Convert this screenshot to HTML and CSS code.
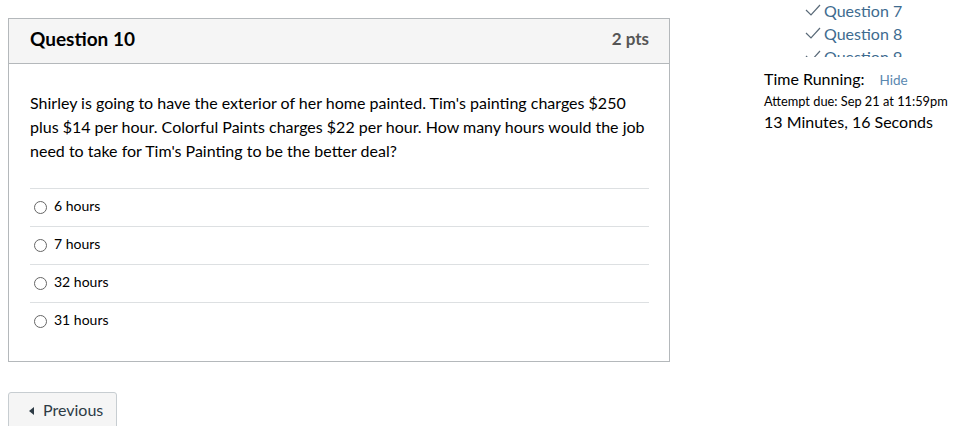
FILE: index.html
```html
<!DOCTYPE html>
<html>
<head>
<meta charset="utf-8">
<link rel="stylesheet" href="styles.css">
</head>
<body>
<div class="page">
  <div class="main">
    <div class="card">
      <div class="card-head">
        <span class="q-title">Question 10</span>
        <span class="q-pts">2 pts</span>
      </div>
      <div class="card-body">
        <p class="q-text">Shirley is going to have the exterior of her home painted. Tim's painting charges $250 plus $14 per hour. Colorful Paints charges $22 per hour. How many hours would the job need to take for Tim's Painting to be the better deal?</p>
        <div class="answers">
          <label class="answer"><span class="radio"></span><span>6 hours</span></label>
          <label class="answer"><span class="radio"></span><span>7 hours</span></label>
          <label class="answer"><span class="radio"></span><span>32 hours</span></label>
          <label class="answer"><span class="radio"></span><span>31 hours</span></label>
        </div>
      </div>
    </div>
    <div class="nav">
      <button class="btn"><span class="tri"></span>Previous</button>
    </div>
  </div>
  <div class="side">
    <ul class="qlist">
      <li><svg class="check" viewBox="0 0 16 12" width="16" height="12"><path d="M1 6 L6 11 L15 1" fill="none" stroke="#5a6a78" stroke-width="1.2"/></svg>Question 7</li>
      <li><svg class="check" viewBox="0 0 16 12" width="16" height="12"><path d="M1 6 L6 11 L15 1" fill="none" stroke="#5a6a78" stroke-width="1.2"/></svg>Question 8</li>
      <li><svg class="check" viewBox="0 0 16 12" width="16" height="12"><path d="M1 6 L6 11 L15 1" fill="none" stroke="#5a6a78" stroke-width="1.2"/></svg>Question 9</li>
    </ul>
    <div class="timer">
      <div class="t-row"><span class="t-label">Time Running:</span><span class="hide">Hide</span></div>
      <div class="due">Attempt due: Sep 21 at 11:59pm</div>
      <div class="remain">13 Minutes, 16 Seconds</div>
    </div>
  </div>
</div>
</body>
</html>
```

FILE: styles.css
```css
html, body {
  margin: 0;
  padding: 0;
  background: #fff;
  font-family: Lato, "Liberation Sans", sans-serif;
  color: #2d3b45;
}
.page {
  display: flex;
  align-items: flex-start;
  padding-left: 8px;
}
.main {
  width: 662px;
  padding-top: 18px;
}
.card {
  border: 1px solid #b4b8bb;
}
.card-head {
  display: flex;
  justify-content: space-between;
  align-items: center;
  height: 45px;
  padding: 0 20px 5px 21px;
  box-sizing: border-box;
  background: #f5f5f5;
  border-bottom: 1px solid #b4b8bb;
}
.q-title {
  font-size: 19px;
  font-weight: 700;
  color: #000;
}
.q-pts {
  font-size: 17px;
  font-weight: 700;
  color: #555;
}
.card-body {
  padding: 27px 20px 21px 21px;
}
.q-text {
  margin: 0 0 25px 0;
  font-size: 16px;
  line-height: 24px;
  color: #000;
}
.answers {
  display: flex;
  flex-direction: column;
}
.answer {
  display: flex;
  align-items: center;
  height: 38px;
  padding-bottom: 4px;
  border-top: 1px solid #dde0e2;
  box-sizing: border-box;
  font-size: 14px;
  color: #000;
  padding-left: 4px;
}
.radio {
  width: 11px;
  height: 11px;
  border: 1px solid #666;
  border-radius: 50%;
  margin-right: 7px;
  margin-top: 3px;
}
.nav {
  padding-top: 30px;
}
.btn {
  display: flex;
  align-items: center;
  height: 40px;
  padding: 0 13px 5px 20px;
  background: #f5f5f5;
  border: 1px solid #c7cdd1;
  border-radius: 3px;
  font-family: Lato, "Liberation Sans", sans-serif;
  font-size: 16px;
  color: #2d3b45;
}
.tri {
  width: 0;
  height: 0;
  border-top: 4px solid transparent;
  border-bottom: 4px solid transparent;
  border-right: 5px solid #2d3b45;
  margin-right: 9px;
  margin-top: 2px;
}
.side {
  margin-left: 94px;
  width: 210px;
}
.qlist {
  list-style: none;
  margin: 0;
  padding: 0 0 0 41px;
  height: 57px;
  overflow: hidden;
}
.qlist li {
  display: flex;
  align-items: center;
  height: 24px;
  font-size: 16px;
  color: #3e6b8f;
  margin-top: -1px;
}
.qlist li:first-child {
  margin-top: -2px;
}
.check {
  margin-right: 3px;
}
.timer {
  padding-top: 13px;
}
.t-row {
  display: flex;
  align-items: baseline;
  font-size: 16px;
  color: #000;
  line-height: 18px;
}
.hide {
  font-size: 13.5px;
  color: #5a88b0;
  margin-left: 15px;
}
.due {
  font-size: 12.8px;
  color: #000;
  line-height: 18px;
  margin-top: 3px;
}
.remain {
  font-size: 16px;
  color: #000;
  line-height: 18px;
  margin-top: 3px;
}
```
